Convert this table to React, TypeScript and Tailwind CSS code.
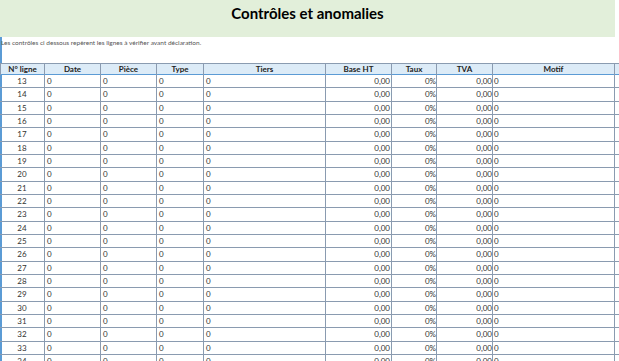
import React from 'react';

const cols = [
  { label: 'N° ligne', align: 'text-center' },
  { label: 'Date', align: 'text-left' },
  { label: 'Pièce', align: 'text-left' },
  { label: 'Type', align: 'text-left' },
  { label: 'Tiers', align: 'text-left' },
  { label: 'Base HT', align: 'text-right' },
  { label: 'Taux', align: 'text-right' },
  { label: 'TVA', align: 'text-right' },
  { label: 'Motif', align: 'text-left' },
];

const gridCols = 'grid grid-cols-[45px_56px_56px_47px_122px_66px_45px_56px_122px]';

const rows = Array.from({ length: 22 }, (_, i) => i + 13);

const App: React.FC = () => {
  return (
    <div className="w-[619px] h-[361px] overflow-hidden bg-white text-[#333]" style={{ fontFamily: 'Lato, "Liberation Sans", sans-serif' }}>
      <div className="w-[615px] h-[37px] bg-[#e2efda] flex items-center justify-center">
        <h1 className="text-[15px] font-bold text-black -mt-[11px]">Contrôles et anomalies</h1>
      </div>
      <div className="border-l-2 border-[#5b9bd5]">
        <div className="w-[613px] h-[26px] bg-white">
          <p className="text-[6.5px] text-[#555] leading-[10px] pt-[1px] -ml-[1px]">
            Les contrôles ci dessous repèrent les lignes à vérifier avant déclaration.
          </p>
        </div>
        <div className={`${gridCols} -ml-[2px] border-t border-[#8a9bb0] bg-[#dcebf7] border-b border-b-[#5b9bd5] h-[12px]`}>
          {cols.map((c, i) => (
            <div key={c.label} className={`text-[8px] font-bold text-[#222] text-center leading-[11px] border-r border-[#8a9bb0] ${i === 0 ? 'border-l' : ''}`}>
              {c.label}
            </div>
          ))}
        </div>
        {rows.map(n => (
          <div key={n} className={`${gridCols} -ml-[2px] h-[13.333px] border-b border-[#8a9bb0]`}>
            <div className="text-[8px] text-center leading-[12px] border-r border-[#8a9bb0]">{n}</div>
            <div className="text-[8px] pl-[2px] leading-[12px] border-r border-[#8a9bb0]">0</div>
            <div className="text-[8px] pl-[2px] leading-[12px] border-r border-[#8a9bb0]">0</div>
            <div className="text-[8px] pl-[2px] leading-[12px] border-r border-[#8a9bb0]">0</div>
            <div className="text-[8px] pl-[2px] leading-[12px] border-r border-[#8a9bb0]">0</div>
            <div className="text-[8px] text-right pr-[1px] leading-[12px] border-r border-[#8a9bb0]">0,00</div>
            <div className="text-[8px] text-right leading-[12px] border-r border-[#8a9bb0]">0%</div>
            <div className="text-[8px] text-right leading-[12px] border-r border-[#8a9bb0]">0,00</div>
            <div className="text-[8px] pl-[1px] leading-[12px] border-r border-[#8a9bb0]">0</div>
          </div>
        ))}
      </div>
    </div>
  );
};

export default App;
